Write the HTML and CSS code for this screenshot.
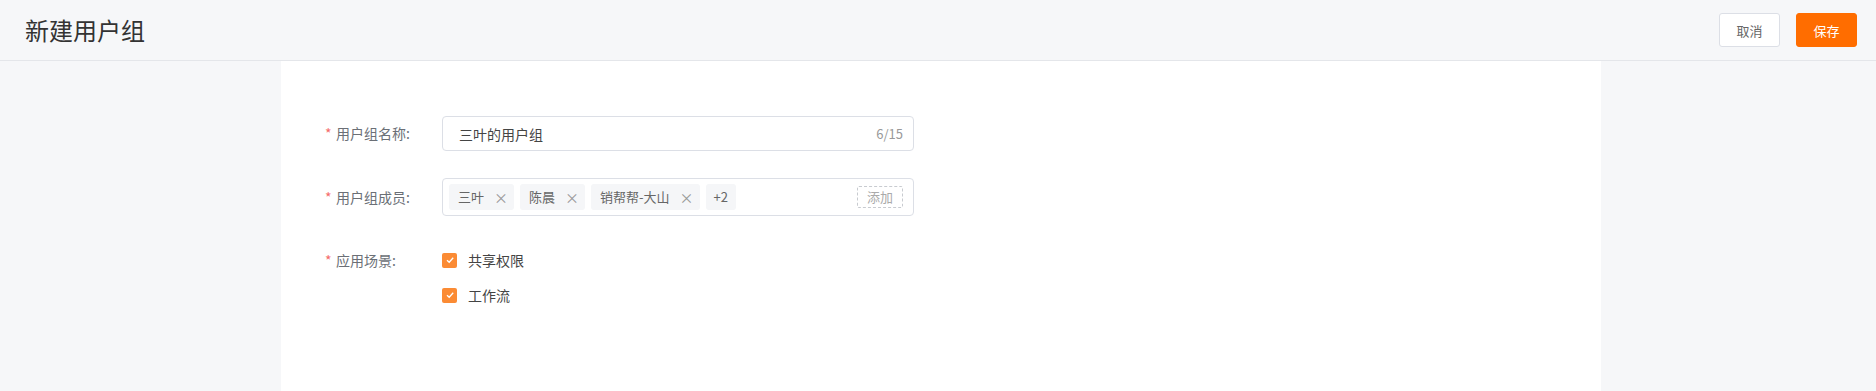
FILE: index.html
```html
<!DOCTYPE html>
<html lang="zh-CN">
<head>
    <meta charset="UTF-8">
    <meta name="viewport" content="width=device-width, initial-scale=1.0">
    <title>新建用户组</title>
    <link rel="stylesheet" href="styles.css">
</head>
<body>
    <header class="topbar">
        <h1 class="title">新建用户组</h1>
        <div class="actions">
            <button class="btn btn-cancel">取消</button>
            <button class="btn btn-save">保存</button>
        </div>
    </header>

    <main class="panel">
        <form class="form">
            <div class="form-item item-name">
                <label class="form-label"><span class="star">*</span>用户组名称:</label>
                <div class="input-box">
                    <span class="input-text">三叶的用户组</span>
                    <span class="counter">6/15</span>
                </div>
            </div>

            <div class="form-item item-members">
                <label class="form-label"><span class="star">*</span>用户组成员:</label>
                <div class="input-box tag-box">
                    <span class="tag">三叶<i class="close">×</i></span>
                    <span class="tag">陈晨<i class="close">×</i></span>
                    <span class="tag">销帮帮-大山<i class="close">×</i></span>
                    <span class="tag tag-more">+2</span>
                    <span class="add-btn">添加</span>
                </div>
            </div>

            <div class="form-item item-scene">
                <label class="form-label"><span class="star">*</span>应用场景:</label>
                <div class="checks">
                    <label class="check">
                        <span class="box">
                            <svg width="10" height="10" viewBox="0 0 10 10"><polyline points="2,5.2 4.2,7.3 8.2,2.8" fill="none" stroke="#fff" stroke-width="1.3"/></svg>
                        </span>
                        共享权限
                    </label>
                    <label class="check">
                        <span class="box">
                            <svg width="10" height="10" viewBox="0 0 10 10"><polyline points="2,5.2 4.2,7.3 8.2,2.8" fill="none" stroke="#fff" stroke-width="1.3"/></svg>
                        </span>
                        工作流
                    </label>
                </div>
            </div>
        </form>
    </main>
</body>
</html>
```

FILE: styles.css
```css
/* styles.css */
body {
    font-family: "Noto Sans CJK SC", "Liberation Sans", sans-serif;
    margin: 0;
    padding: 0;
    background-color: #f6f7f9;
    color: #333;
}

.topbar {
    height: 60px;
    border-bottom: 1px solid #e4e6ea;
    display: flex;
    justify-content: space-between;
    align-items: center;
    padding: 0 19px 0 25px;
}

.title {
    margin: 0;
    font-size: 24px;
    font-weight: normal;
    line-height: 32px;
    color: #333;
}

.actions {
    display: flex;
    gap: 16px;
}

.btn {
    width: 61px;
    height: 34px;
    font-family: inherit;
    font-size: 13px;
    border-radius: 3px;
    cursor: pointer;
    padding: 0;
}

.btn-cancel {
    background-color: #fff;
    border: 1px solid #dcdfe6;
    color: #666;
}

.btn-save {
    background-color: #ff6d00;
    border: 1px solid #ff6d00;
    color: #fff;
}

.panel {
    width: 1320px;
    margin-left: 281px;
    min-height: calc(100vh - 61px);
    background-color: #fff;
    box-sizing: border-box;
    padding: 55px 44px 0;
}

.form-item {
    display: flex;
    align-items: flex-start;
}

.form-label {
    width: 117px;
    font-size: 14px;
    color: #6b6f76;
    display: flex;
}

.star {
    color: #f56c6c;
    width: 11px;
}

.item-name {
    margin-bottom: 27px;
}

.item-name .form-label {
    line-height: 35px;
}

.item-members {
    margin-bottom: 34px;
}

.item-members .form-label {
    line-height: 38px;
}

.item-scene .form-label {
    line-height: 20px;
}

.input-box {
    width: 472px;
    box-sizing: border-box;
    border: 1px solid #dcdfe6;
    border-radius: 4px;
    display: flex;
    align-items: center;
}

.item-name .input-box {
    height: 35px;
    padding: 0 10px 0 16px;
    justify-content: space-between;
}

.input-text {
    font-size: 14px;
    color: #444;
}

.counter {
    font-size: 13px;
    color: #999;
}

.tag-box {
    height: 38px;
    padding: 0 10px 0 6px;
    gap: 6px;
}

.tag {
    height: 26px;
    line-height: 26px;
    padding: 0 6px 0 9px;
    background-color: #f5f6f8;
    border-radius: 3px;
    font-size: 13px;
    color: #666;
    display: flex;
    align-items: center;
}

.close {
    font-style: normal;
    color: #999;
    font-size: 14px;
    margin-left: 10px;
}

.tag-more {
    padding: 0 8px;
}

.add-btn {
    margin-left: auto;
    width: 46px;
    height: 22px;
    line-height: 20px;
    box-sizing: border-box;
    border: 1px dashed #c8cbd0;
    border-radius: 2px;
    font-size: 13px;
    color: #aaa;
    text-align: center;
}

.checks {
    display: flex;
    flex-direction: column;
    gap: 15px;
}

.check {
    display: flex;
    align-items: center;
    height: 20px;
    font-size: 14px;
    color: #444;
}

.box {
    width: 15px;
    height: 15px;
    border-radius: 2px;
    background-color: #fb8b34;
    display: flex;
    align-items: center;
    justify-content: center;
    margin-right: 11px;
}
```
